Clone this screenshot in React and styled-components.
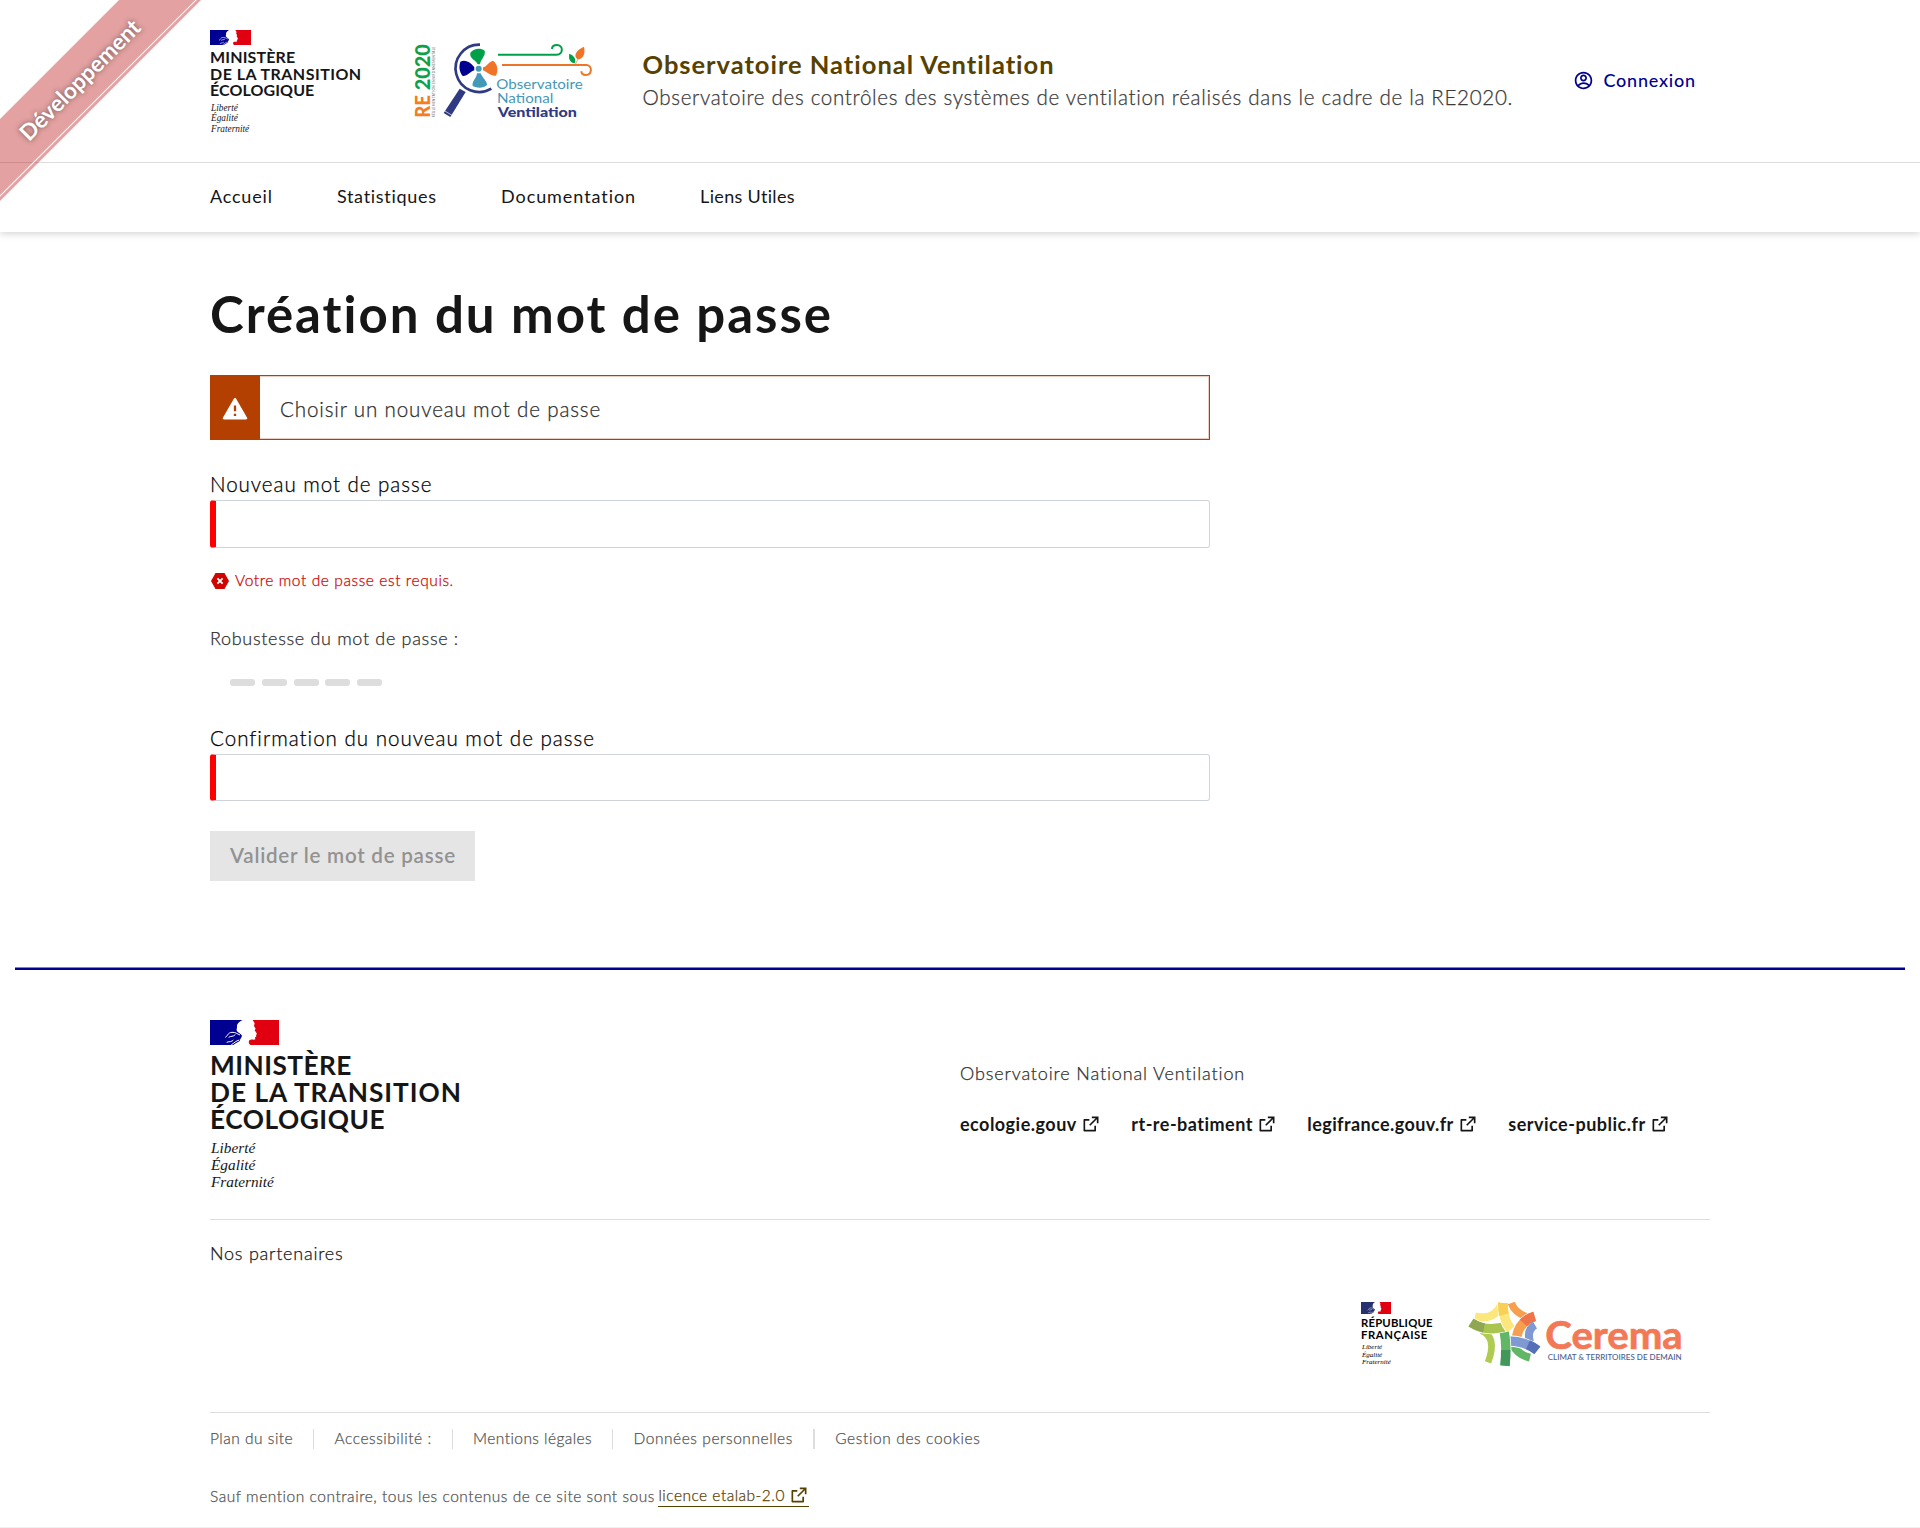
import React from "react";
import styled, { createGlobalStyle } from "styled-components";
import { RiAccountCircleLine, RiExternalLinkLine, RiAlertFill } from "react-icons/ri";

const GlobalStyle = createGlobalStyle`
  *, *::before, *::after { box-sizing: border-box; }
  body { margin: 0; background: #fff; color: #161616; font-family: Lato, "Open Sans", sans-serif; overflow-x: hidden; }
  h1, p, ul { margin: 0; padding: 0; }
  ul { list-style: none; }
  a { color: inherit; text-decoration: none; }
`;

const thin = `
  font-weight: 300;
  -webkit-text-stroke: 0.25px currentColor;
`;

const Text = styled.span`
  letter-spacing: ${(p) => p.$ls || 0}px;
  margin-right: ${(p) => -(p.$ls || 0)}px;
  font-variant-ligatures: none;
  white-space: nowrap;
`;

const Page = styled.div`
  position: relative;
  height: 1528px;
  overflow: hidden;
`;

const Ribbon = styled.div`
  position: absolute;
  z-index: 5;
  top: 51px;
  left: -120px;
  width: 400px;
  height: 58px;
  display: flex;
  align-items: center;
  justify-content: center;
  padding-bottom: 1px;
  transform: rotate(-45deg);
  background: rgba(180, 0, 0, 0.37);
  color: #fff;
  font-size: 22.5px;
  font-weight: 700;
  text-shadow: 0 0 5px rgba(0, 0, 0, 0.5);
  &::after {
    content: "";
    position: absolute;
    left: 0;
    right: 0;
    bottom: 3px;
    border-bottom: 1px solid #fff;
  }
`;

const Header = styled.header`
  height: 232px;
  box-shadow: 0 2px 7px rgba(0, 0, 0, 0.17);
`;
const Container = styled.div`
  width: 1500px;
  margin: 0 auto;
`;
const HeaderTop = styled(Container)`
  display: flex;
  align-items: flex-start;
  height: 162px;
  padding-top: 30px;
`;
const Brand = styled.div`
  flex: none;
  width: ${(p) => p.$width};
`;
const BrandName = styled.div`
  display: flex;
  flex-direction: column;
  margin-top: ${(p) => p.$gap}px;
  font-size: ${(p) => p.$size}px;
  line-height: ${(p) => p.$line}px;
  font-weight: 700;
`;
const Motto = styled.div`
  display: flex;
  flex-direction: column;
  margin-top: ${(p) => p.$gap}px;
  padding-left: 1px;
  font: italic ${(p) => p.$size}px/${(p) => p.$line}px "Liberation Serif", serif;
`;
const LogoLink = styled.div`
  flex: none;
  padding-top: 10px;
  svg { display: block; overflow: visible; }
`;
const Service = styled.div`
  flex: 1;
  display: flex;
  flex-direction: column;
  padding: 17px 0 0 47.5px;
`;
const ServiceTitle = styled.p`
  font-size: 25.5px;
  line-height: 35px;
  font-weight: 700;
  color: #574100;
`;
const ServiceTagline = styled.p`
  font-size: 20.6px;
  line-height: 30px;
  ${thin}
  color: #3a3a3a;
`;
const Login = styled.a`
  display: flex;
  align-items: center;
  gap: 10px;
  margin: 35px 15px 0 0;
  font-size: 18px;
  line-height: 30px;
  font-weight: 500;
  color: #000091;
`;
const Nav = styled.nav`
  border-top: 1px solid #ddd;
`;
const NavList = styled(Container).attrs({ as: "ul" })`
  display: flex;
  gap: 65px;
  padding: 18px 0 0 0;
  font-size: 18px;
  line-height: 30px;
`;

const Main = styled(Container).attrs({ as: "main" })`
  height: 736px;
  padding-top: 52px;
`;
const Title = styled.h1`
  font-size: 51px;
  line-height: 60px;
  font-weight: 700;
`;
const Form = styled.form`
  width: 1000px;
  display: flex;
  flex-direction: column;
`;
const Alert = styled.div`
  display: flex;
  height: 65px;
  margin-top: 31px;
  border: 1px solid #b34000;
  box-shadow: inset 0 0 0 1px rgba(179, 64, 0, 0.25);
  font-size: 20.6px;
  line-height: 30px;
  ${thin}
  color: #2e2e2e;
`;
const AlertIcon = styled.div`
  width: 49px;
  padding: 3px 2px 0 0;
  display: flex;
  align-items: center;
  justify-content: center;
  background: #b34000;
  color: #fff;
`;
const AlertBody = styled.p`
  padding: 18px 20px;
`;
const Label = styled.label`
  margin-top: ${(p) => p.$gap}px;
  padding-bottom: 1px;
  font-size: 20.6px;
  line-height: 30px;
  ${thin}
  color: #000;
`;
const Input = styled.input`
  height: ${(p) => p.$height}px;
  padding: 0 12px;
  border: 1px solid #ced4da;
  border-left: 6px solid #f00;
  border-radius: 3px;
  background: #fff;
`;
const ErrorText = styled.p`
  display: flex;
  align-items: center;
  gap: 6px;
  margin: 20px 0 0 1px;
  font-size: 15.5px;
  line-height: 25px;
  ${thin}
  color: #ce0500;
`;
const Hint = styled.p`
  margin-top: 30px;
  font-size: 18px;
  line-height: 31px;
  ${thin}
  color: #2e2e2e;
`;
const Meter = styled.div`
  display: flex;
  gap: 6.75px;
  margin: 25px 0 0 20px;
`;
const Bar = styled.span`
  width: 25px;
  height: 7px;
  border-radius: 3px;
  background: #ddd;
`;
const Submit = styled.button`
  align-self: flex-start;
  width: 265px;
  height: 50px;
  margin-top: 30px;
  padding: 0 0 2px 20px;
  border: 0;
  background: #e5e5e5;
  color: #929292;
  font: 600 20.6px/30px Lato, sans-serif;
  text-align: left;
`;

const Footer = styled.footer`
  margin: 0 15px;
  padding: 50px 195px 0;
  border-top: 2px solid #000091;
  box-shadow: 0 -1px 0 rgba(0, 0, 145, 0.5);
`;
const FooterTop = styled.div`
  display: flex;
  height: 200px;
  border-bottom: 1px solid #ddd;
`;
const FooterContent = styled.div`
  padding-top: 38px;
  font-size: 18px;
  line-height: 30px;
`;
const FooterDesc = styled.p`
  ${thin}
  color: #2e2e2e;
`;
const SiteLinks = styled.ul`
  display: flex;
  gap: 30px;
  margin-top: 21px;
  font-weight: 700;
`;
const ExternalLink = styled.a`
  display: flex;
  align-items: center;
  gap: 5px;
`;
const Partners = styled.section`
  height: 193px;
  padding-top: 18px;
  border-bottom: 1px solid #ddd;
  font-size: 18px;
  line-height: 30px;
  ${thin}
`;
const PartnerLogos = styled.div`
  display: flex;
  justify-content: flex-end;
  align-items: flex-start;
  gap: 37px;
  margin: 34px 26px 0 0;
  color: #000;
  -webkit-text-stroke: 0;
`;
const LegalLinks = styled.ul`
  display: flex;
  gap: 20.4px;
  padding-top: 16px;
  font-size: 15.5px;
  line-height: 20px;
  ${thin}
  color: #555;
  li { height: 20px; line-height: 18px; }
  li + li { padding-left: 20.4px; border-left: 1px solid #ddd; }
  li:last-child { border-left-width: 2px; }
`;
const License = styled.p`
  display: flex;
  margin-top: 35px;
  font-size: 15.5px;
  line-height: 25px;
  ${thin}
  color: #555;
`;
const LicenseLink = styled.a`
  display: flex;
  align-items: center;
  gap: 5px;
  height: 23px;
  margin-left: 4px;
  border-bottom: 1px solid #574100;
  color: #574100;
`;
const BottomLine = styled.div`
  height: 1px;
  margin-top: 18px;
  background: #f0f0f0;
`;

const BlockSvg = styled.svg`
  display: block;
`;

const Flag = ({ width, height, blue = "#000091", red = "#e1000f" }) => (
  <BlockSvg width={width} height={height} viewBox="0 0 207 75" preserveAspectRatio="none">
    <path fill={blue} d="M0 0H98C90 3 81 10 81 19C82 25 78 28 81 34C84 38 94 42 96 47C95 53 89 57 90 62C85 66 76 69 70 75H0Z" />
    <path fill={red} d="M128 0H207V75H122C116 72 115 66 118 61C124 56 131 61 136 58L135 52L139 50L138 46L141 41L134 31L137 26L132 18L134 10Z" />
    <g fill="none" stroke="#fff" strokeWidth="3">
      <path d="M46 52C54 48 52 38 66 37C76 36 82 42 90 45" />
      <path d="M56 52C64 47 68 51 76 44M50 67C58 64 66 66 70 60M64 74C72 70 78 62 88 60" />
    </g>
  </BlockSvg>
);

const OnvLogo = () => (
  <svg width="182" height="80" viewBox="39 60 546 240">
    <g fontFamily="Lato, sans-serif">
      <text transform="translate(90 293) rotate(-90)" fontSize="60" fontWeight="900" fill="#f57c1f" textLength="68" lengthAdjust="spacingAndGlyphs">RE</text>
      <text transform="translate(90 211) rotate(-90)" fontSize="60" fontWeight="900" fill="#0fa14a" textLength="138" lengthAdjust="spacingAndGlyphs">2020</text>
      <text transform="translate(104 292) rotate(-90)" fontSize="9" fill="#555" textLength="212">RÉGLEMENTATION ENVIRONNEMENTALE</text>
      <text x="289" y="207" fontSize="41" fill="#4499b8" textLength="259" lengthAdjust="spacingAndGlyphs">Observatoire</text>
      <text x="291" y="248" fontSize="41" fill="#4499b8" textLength="169" lengthAdjust="spacingAndGlyphs">National</text>
      <text x="293" y="291" fontSize="42" fontWeight="900" fill="#303a82" textLength="238" lengthAdjust="spacingAndGlyphs">Ventilation</text>
    </g>
    <path d="M240 74A71 71 0 1 0 274 206" fill="none" stroke="#303a82" strokeWidth="8" />
    <path d="M179 206L197 216L151 291L131 279Z" fill="#303a82" />
    <path d="M133 272L156 286" stroke="#fff" strokeWidth="2" />
    <path fill="#00a04a" d="M233 133C228 118 208 118 211 98C222 84 242 83 254 92C258 106 242 118 240 133Z" />
    <path fill="#000091" d="M223 142C208 124 195 119 181 125C176 140 178 156 188 168C200 170 212 154 223 151Z" />
    <path fill="#f07428" d="M249 142C262 140 264 126 279 122C293 132 296 150 288 167C274 170 262 156 249 151Z" />
    <path fill="#4499b8" d="M231 160C230 175 215 183 218 198C235 206 250 204 261 195C262 184 246 172 242 160Z" />
    <circle cx="236" cy="146" r="12" fill="#fff" />
    <circle cx="236" cy="146" r="9" fill="#4499b8" />
    <g fill="none" strokeWidth="6">
      <path stroke="#00a04a" d="M294 104H470C491 103 490 75 471 75C462 75 456 79 456 87" />
      <path stroke="#f07428" d="M306 135H560C578 137 576 165 558 165C549 165 544 160 544 154" />
    </g>
    <path fill="#00a04a" d="M508 101C521 106 530 117 524 130C509 127 505 116 508 101Z" />
    <path fill="#f07428" d="M552 80C556 98 552 116 533 118C519 108 527 91 552 80Z" />
    <path d="M534 117L526 133" stroke="#f07428" strokeWidth="2" />
  </svg>
);

const CeremaLogo = () => (
  <BlockSvg width="216" height="66" viewBox="382 64 648 198">
    <g fill="none">
      <path stroke="#fbe77c" strokeWidth="24" d="M403 107Q462 122 484 68" />
      <path stroke="#b0cb52" strokeWidth="20" d="M422 150Q471 170 442 245" />
      <path stroke="#fff" strokeWidth="33" d="M391 126Q440 158 504 134" />
      <path stroke="#a9c44f" strokeWidth="28" d="M391 126Q440 158 504 134" />
      <path stroke="#8fa653" strokeWidth="28" d="M391 126Q410 138 430 142" />
      <path stroke="#fff" strokeWidth="34" d="M487 67Q487 120 511 146" />
      <path stroke="#fbe77c" strokeWidth="29" d="M487 67Q487 120 511 146" />
      <path stroke="#f9cf55" strokeWidth="29" d="M487 67Q486 88 490 102" />
      <path stroke="#f6a04f" strokeWidth="22" d="M512 67Q522 96 558 108" />
      <path stroke="#fff" strokeWidth="34" d="M582 107Q536 122 528 168" />
      <path stroke="#f6a04f" strokeWidth="29" d="M582 107Q536 122 528 168" />
      <path stroke="#f0744a" strokeWidth="29" d="M582 107Q560 113 548 127" />
      <path stroke="#7f99d3" strokeWidth="24" d="M583 133Q557 148 568 184" />
      <path stroke="#62b766" strokeWidth="24" d="M568 231Q530 222 517 192" />
      <path stroke="#fff" strokeWidth="34" d="M503 181Q550 180 590 209" />
      <path stroke="#7f99d3" strokeWidth="29" d="M503 181Q550 180 590 209" />
      <path stroke="#5570b8" strokeWidth="29" d="M562 192Q578 199 590 209" />
      <path stroke="#fff" strokeWidth="33" d="M491 155Q499 200 493 255" />
      <path stroke="#62b766" strokeWidth="28" d="M491 155Q499 200 493 255" />
      <path stroke="#42985a" strokeWidth="28" d="M495 208Q495 232 493 255" />
    </g>
    <text x="614" y="204" fontFamily="Lato, sans-serif" fontSize="117" fontWeight="700" fill="#f37856" stroke="#f37856" strokeWidth="2" textLength="412" lengthAdjust="spacingAndGlyphs">Cerema</text>
    <text x="621" y="239" fontFamily="Lato, sans-serif" fontSize="24" fontWeight="500" fill="#4a5c8c" textLength="402">CLIMAT &amp; TERRITOIRES DE DEMAIN</text>
  </BlockSvg>
);

const ErrorIcon = () => (
  <svg width="18" height="16" viewBox="0 0 18 16">
    <path d="M4.5 0H13.5L18 8L13.5 16H4.5L0 8Z" fill="#ce0500" />
    <path d="M6.4 5.4L11.6 10.6M11.6 5.4L6.4 10.6" stroke="#fff" strokeWidth="1.8" />
  </svg>
);

const NAV = [["Accueil", 0.8], ["Statistiques", 0.7], ["Documentation", 0.93], ["Liens Utiles", 0.32]];
const SITES = [["ecologie.gouv", 0.48], ["rt-re-batiment", 0.48], ["legifrance.gouv.fr", 0.4], ["service-public.fr", 0.5]];
const LEGAL = [
  ["Plan du site", 0.5],
  ["Accessibilité :", 0.54],
  ["Mentions légales", 0.44],
  ["Données personnelles", 0.56],
  ["Gestion des cookies", 0.62],
];

export default function App() {
  return (
    <Page>
      <GlobalStyle />
      <Ribbon><Text>Développement</Text></Ribbon>
      <Header>
        <HeaderTop>
          <Brand $width="203px">
            <Flag width={41} height={15} />
            <BrandName $gap={4} $size={16} $line={16.7}>
              <div><Text $ls={0.15}>MINISTÈRE</Text></div>
              <div><Text $ls={0.48}>DE LA TRANSITION</Text></div>
              <div><Text $ls={0.1}>ÉCOLOGIQUE</Text></div>
            </BrandName>
            <Motto $gap={4} $size={9.3} $line={10.2}>
              <div><Text>Liberté</Text></div>
              <div><Text>Égalité</Text></div>
              <div><Text>Fraternité</Text></div>
            </Motto>
          </Brand>
          <LogoLink><OnvLogo /></LogoLink>
          <Service>
            <ServiceTitle><Text $ls={0.98}>Observatoire National Ventilation</Text></ServiceTitle>
            <ServiceTagline>
              <Text $ls={0.67}>Observatoire des contrôles des systèmes de ventilation réalisés dans le cadre de la RE2020.</Text>
            </ServiceTagline>
          </Service>
          <Login href="#"><RiAccountCircleLine size={21} /><Text $ls={0.76}>Connexion</Text></Login>
        </HeaderTop>
        <Nav>
          <NavList>{NAV.map(([t, ls]) => <li key={t}><Text $ls={ls}>{t}</Text></li>)}</NavList>
        </Nav>
      </Header>
      <Main>
        <Title><Text $ls={1.98}>Création du mot de passe</Text></Title>
        <Form>
          <Alert>
            <AlertIcon><RiAlertFill size={28} /></AlertIcon>
            <AlertBody><Text $ls={0.84}>Choisir un nouveau mot de passe</Text></AlertBody>
          </Alert>
          <Label $gap={29}><Text $ls={0.94}>Nouveau mot de passe</Text></Label>
          <Input type="password" $height={48} />
          <ErrorText><ErrorIcon /><Text $ls={0.59}>Votre mot de passe est requis.</Text></ErrorText>
          <Hint><Text $ls={0.68}>Robustesse du mot de passe :</Text></Hint>
          <Meter>{[0, 1, 2, 3, 4].map((i) => <Bar key={i} />)}</Meter>
          <Label $gap={37}><Text $ls={0.98}>Confirmation du nouveau mot de passe</Text></Label>
          <Input type="password" $height={47} />
          <Submit type="button" disabled><Text $ls={0.74}>Valider le mot de passe</Text></Submit>
        </Form>
      </Main>
      <Footer>
        <FooterTop>
          <Brand $width="750px">
            <Flag width={69} height={25} />
            <BrandName $gap={7} $size={26.25} $line={27}>
              <div><Text $ls={0.45}>MINISTÈRE</Text></div>
              <div><Text $ls={0.98}>DE LA TRANSITION</Text></div>
              <div><Text $ls={0.54}>ÉCOLOGIQUE</Text></div>
            </BrandName>
            <Motto $gap={6} $size={15.3} $line={17.2}>
              <div><Text>Liberté</Text></div>
              <div><Text>Égalité</Text></div>
              <div><Text>Fraternité</Text></div>
            </Motto>
          </Brand>
          <FooterContent>
            <FooterDesc><Text $ls={0.86}>Observatoire National Ventilation</Text></FooterDesc>
            <SiteLinks>
              {SITES.map(([t, ls]) => (
                <li key={t}>
                  <ExternalLink href="#"><Text $ls={ls}>{t}</Text><RiExternalLinkLine size={20} /></ExternalLink>
                </li>
              ))}
            </SiteLinks>
          </FooterContent>
        </FooterTop>
        <Partners>
          <p><Text $ls={0.76}>Nos partenaires</Text></p>
          <PartnerLogos>
            <Brand $width="70px">
              <Flag width={30} height={12} blue="#27316f" />
              <BrandName $gap={3} $size={11.3} $line={12}>
                <div><Text $ls={0.19}>RÉPUBLIQUE</Text></div>
                <div><Text $ls={0.6}>FRANÇAISE</Text></div>
              </BrandName>
              <Motto $gap={3} $size={7} $line={7.5}>
                <div><Text>Liberté</Text></div>
                <div><Text>Égalité</Text></div>
                <div><Text>Fraternité</Text></div>
              </Motto>
            </Brand>
            <CeremaLogo />
          </PartnerLogos>
        </Partners>
        <LegalLinks>{LEGAL.map(([t, ls]) => <li key={t}><Text $ls={ls}>{t}</Text></li>)}</LegalLinks>
        <License>
          <Text $ls={0.54}>Sauf mention contraire, tous les contenus de ce site sont sous</Text>
          <LicenseLink href="#"><Text $ls={0.48}>licence etalab-2.0</Text><RiExternalLinkLine size={20} /></LicenseLink>
        </License>
      </Footer>
      <BottomLine />
    </Page>
  );
}
